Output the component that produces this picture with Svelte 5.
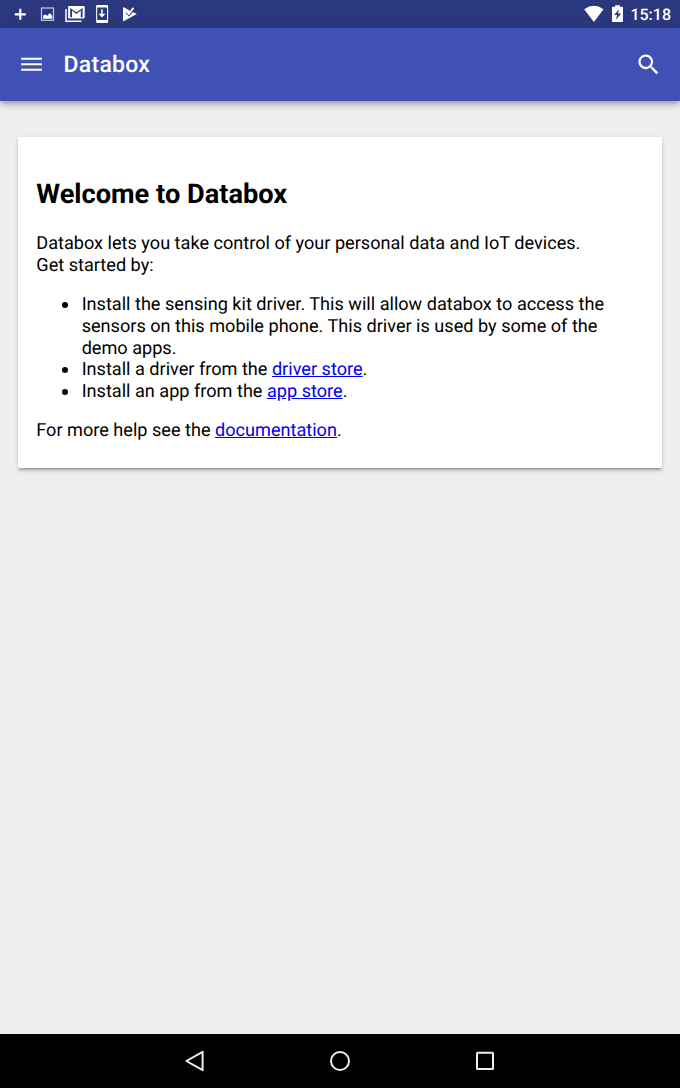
<script>
  const links = { driver: '#drivers', app: '#apps', docs: '#documentation' };
</script>

<div class="screen">
  <div class="status">
    <div class="notifications">
      <svg width="28" height="28" viewBox="0 0 28 28"><path d="M20.3 8.8v11M14.8 14.3h11" stroke="#fff" stroke-width="2.2" fill="none" /></svg>
      <svg width="27" height="28" viewBox="0 0 27 28"><rect x="13.5" y="8" width="12" height="12.3" fill="none" stroke="#c9cce4" stroke-width="1.2" /><path fill="#fff" d="M15 18.8v-3l2.1-1.2 2.2 1.1 2.6-2.6 2.4 2.8v2.9z" /></svg>
      <svg width="30" height="28" viewBox="0 0 30 28"><path d="M11 9v12.3h15.5" stroke="#fff" stroke-width="1.5" fill="none" /><path fill="#fff" fill-rule="evenodd" d="M14.3 6h14.2q1.2 0 1.2 1.2v10.1q0 1.2-1.2 1.2H14.3q-1.2 0-1.2-1.2V7.2q0-1.2 1.2-1.2zm.9 2v9.2h1.8V10.5l4.4 3.6 4.4-3.6v6.7h1.8V8l-6.2 4.2z" /></svg>
      <svg width="25" height="28" viewBox="0 0 25 28"><path fill="#fff" fill-rule="evenodd" d="M12.3 5h9.6q1.2 0 1.2 1.2v15.5q0 1.2-1.2 1.2h-9.6q-1.2 0-1.2-1.2V6.2q0-1.2 1.2-1.2zM12.2 7.4v12.5h9.8V7.4z" /><path fill="#fff" d="M16.2 9.2h1.5v4.6h2.8L17 17.5l-3.4-3.7h2.6z" /></svg>
      <svg width="28" height="28" viewBox="0 0 28 28"><path fill="#fff" d="M13 7.1 26.8 14 13 21.5z" /><path d="m16 12.4 2.9 3.2 5.2-5.8" fill="none" stroke="#2c387e" stroke-width="1.2" /><path fill="#2c387e" d="m19 10 2-3 4 1-4 4.5z" /><path d="m16.4 11 2.4 2.8 4.7-6" fill="none" stroke="#fff" stroke-width="1.9" /></svg>
    </div>
    <div class="system">
      <svg width="21" height="28" viewBox="0 0 21 28"><path fill="#fff" d="M.2 9.2Q9.9 2.5 19.5 9.2L9.9 22z" /></svg>
      <svg width="12" height="28" viewBox="0 0 12 28"><path fill="#fff" d="M3.2 5.2h4.6v1.6H10q1 0 1 1v13.5q0 .8-.8.8H.8q-.8 0-.8-.8V7.8q0-1 1-1h2.2z" /><path fill="#2c387e" d="M7.2 9.2 2.1 15h3l-1.2 4.8 5.3-6.4H6z" /></svg>
      <span class="clock">15:18</span>
    </div>
  </div>

  <header>
    <button aria-label="Menu"><svg width="22" height="16" viewBox="0 0 22 16"><path fill="#fff" d="M.2 1.7h20.7v2H.2zM.2 7.2h20.7v2H.2zM.2 12.8h20.7v2H.2z" /></svg></button>
    <h1>Databox</h1>
    <button class="search" aria-label="Search"><svg width="27.2" height="27.2" viewBox="0 0 24 24"><path fill="#fff" d="M15.5 14h-.79l-.28-.27C15.41 12.59 16 11.11 16 9.5 16 5.91 13.09 3 9.5 3S3 5.91 3 9.5 5.91 16 9.5 16c1.61 0 3.09-.59 4.23-1.57l.27.28v.79l5 4.99L20.49 19l-4.99-5zm-6 0C7.01 14 5 11.99 5 9.5S7.01 5 9.5 5 14 7.01 14 9.5 11.99 14 9.5 14z" /></svg></button>
  </header>

  <main>
    <section class="card">
      <h2>Welcome to Databox</h2>
      <p>Databox lets you take control of your personal data and IoT devices.<br />Get started by:</p>
      <ul>
        <li>Install the sensing kit driver. This will allow databox to access the sensors on this mobile phone. This driver is used by some of the demo apps.</li>
        <li>Install a driver from the <a href={links.driver}>driver store</a>.</li>
        <li>Install an app from the <a href={links.app}>app store</a>.</li>
      </ul>
      <p>For more help see the <a href={links.docs}>documentation</a>.</p>
    </section>
  </main>

  <nav>
    <svg width="24" height="24" viewBox="0 0 24 24"><path d="M19.6 2.8v18.4L3.4 12z" fill="none" stroke="#eee" stroke-width="2" stroke-linejoin="round" /></svg>
    <svg width="24" height="24" viewBox="0 0 24 24"><circle cx="12" cy="12" r="9" fill="none" stroke="#eee" stroke-width="2" /></svg>
    <svg width="24" height="24" viewBox="0 0 24 24"><rect x="4" y="3.7" width="16" height="16.3" rx=".5" fill="none" stroke="#eee" stroke-width="2" /></svg>
  </nav>
</div>

<style>
  :global(body) { margin: 0; }
  .screen {
    width: 680px;
    height: 1088px;
    display: flex;
    flex-direction: column;
    background: #eee;
    color: #000;
    font-family: Roboto, sans-serif;
    text-rendering: geometricPrecision;
    overflow: hidden;
  }
  svg { display: block; flex: none; }
  .status {
    flex: none;
    height: 28px;
    display: flex;
    justify-content: space-between;
    background: #2c387e;
    color: #fff;
  }
  .notifications, .system { display: flex; align-items: center; }
  .system { padding-right: 9px; }
  .system svg + svg { margin-left: 7.5px; }
  .clock { margin-left: 6px; font-size: 16px; font-weight: 500; line-height: 28px; padding-top: 1px; box-sizing: border-box; height: 28px; }
  header {
    flex: none;
    height: 72.5px;
    box-sizing: border-box;
    padding: 0 18px 0 21px;
    display: flex;
    align-items: center;
    background: #3f51b5;
    color: #fff;
    box-shadow: 0 2.3px 4.5px -1px rgba(0,0,0,.2), 0 4.5px 5.6px rgba(0,0,0,.14), 0 1.1px 11.3px rgba(0,0,0,.12);
  }
  button { display: block; padding: 0; border: 0; background: none; }
  h1 { margin: 2px 0 0 20.5px; font-size: 23px; font-weight: 500; line-height: 36px; letter-spacing: .27px; }
  .search { margin-left: auto; }
  main { flex: 1; padding: 36.5px 18px 0; }
  .card {
    box-sizing: border-box;
    height: 331px;
    padding: 19px 18.3px 0;
    border-radius: 2.27px;
    background: #fff;
    box-shadow: 0 3.4px 1.1px -2.3px rgba(0,0,0,.2), 0 2.3px 2.3px rgba(0,0,0,.14), 0 1.1px 5.7px rgba(0,0,0,.12);
    font-size: 18.13px;
    line-height: 21.53px;
  }
  h2 { margin: 23px 0 22.6px; font-size: 27.2px; line-height: 31.7px; font-weight: 700; }
  p, ul { margin: 18.13px 0; }
  ul { padding-left: 45.33px; list-style: none; }
  li::before {
    content: '';
    float: left;
    width: 6px;
    height: 6px;
    margin: 8px 0 0 -19.3px;
    border-radius: 50%;
    background: #000;
  }
  a { color: #0000ee; }
  nav {
    flex: none;
    height: 54.4px;
    box-sizing: border-box;
    padding: 0 183px;
    display: flex;
    justify-content: space-between;
    align-items: center;
    background: #000;
  }
</style>
